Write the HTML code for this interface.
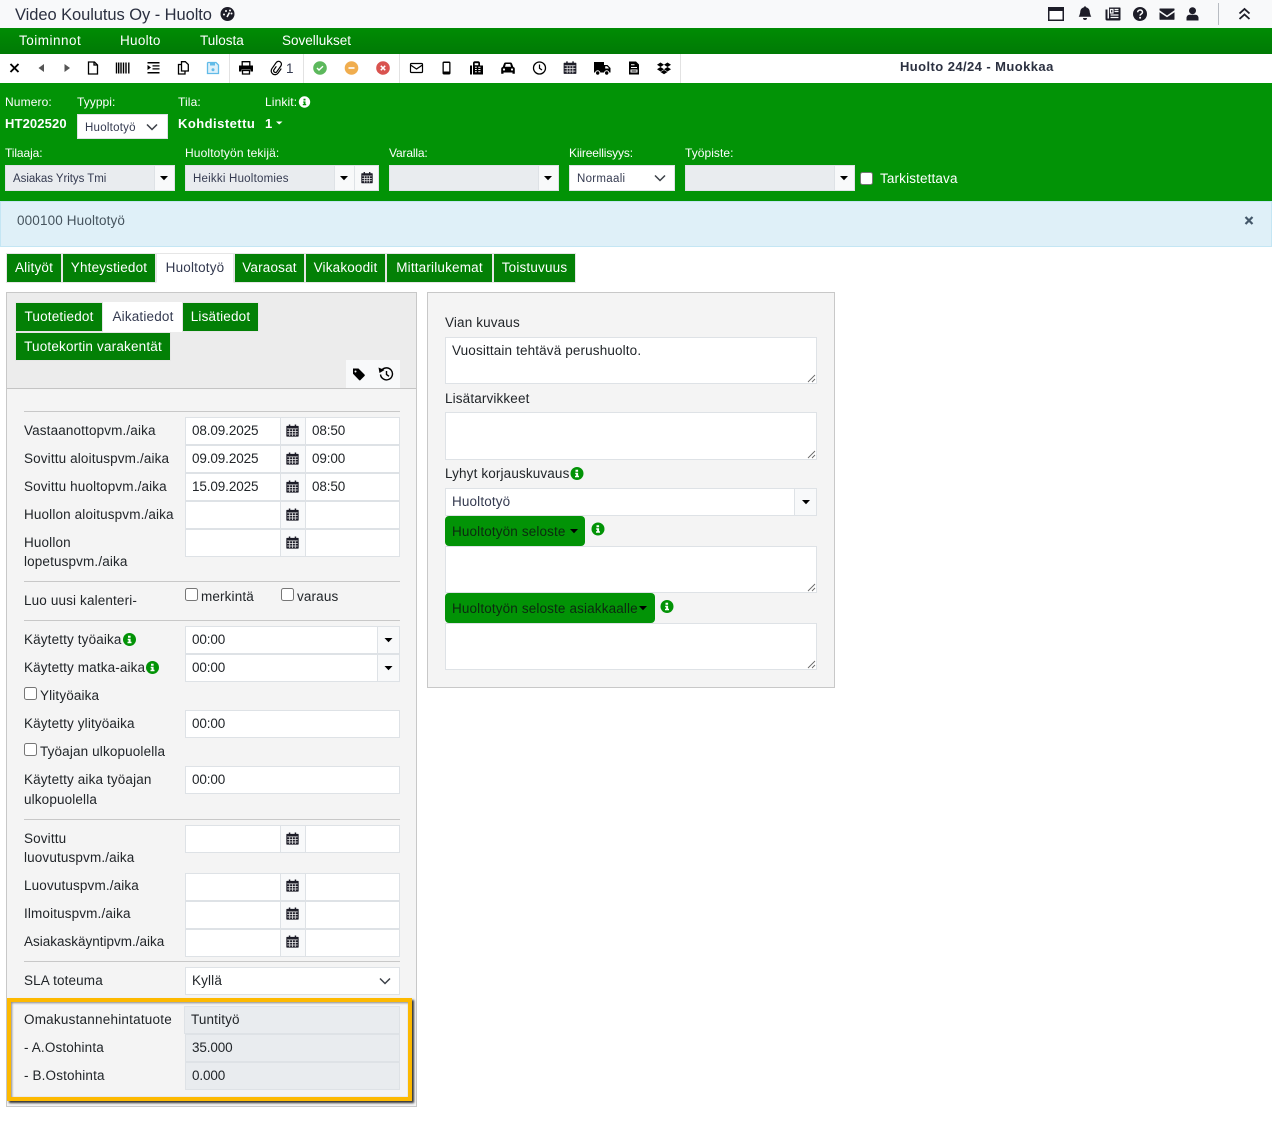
<!DOCTYPE html>
<html lang="fi"><head><meta charset="utf-8"><title>Huolto</title>
<style>
html,body{margin:0;padding:0;background:#fff}
#p{position:relative;width:1272px;height:1142px;overflow:hidden;font-family:"Liberation Sans",sans-serif;font-size:13.5px;letter-spacing:.14px;color:#212529;background:#fff}
#p div,#p span.t{position:absolute;box-sizing:border-box}
.t{white-space:nowrap;line-height:18px;height:18px;margin-top:1px}
.w{color:#fff}
.s{font-size:12px;letter-spacing:.05px;margin-top:0}
.m{margin-top:0}
.b{font-weight:bold}
.n{letter-spacing:-.12px}
.f{background:#fff;border:1px solid #dee2e6}
.g{background:#e9ecef;border:1px solid #dee2e6}
.a{background:#f8f9fa;border:1px solid #dee2e6}
.hr{height:1px;background:#c8c8c8;left:24px;width:376px}
.tab{background:#038006;color:#fff;text-align:center;line-height:28px;border:1px solid #e6e6e6;white-space:nowrap;letter-spacing:.18px}
.on{background:#fff;color:#343a50}
.cb{background:#fff;border:1px solid #767676;border-radius:2.5px;width:13px;height:13px}
.btn{background:#029306;border-radius:4px;color:#0c2a10;line-height:32px;padding-left:7px;white-space:nowrap;letter-spacing:.14px}
</style></head><body><div id="p">

<div style="left:0;top:0;width:1272px;height:28px;background:#f8f9fa"></div>
<span class="t" style="left:15px;top:5px;font-size:16.5px;letter-spacing:-.07px;color:#2b3040">Video Koulutus Oy - Huolto</span>

<div style="left:0;top:28px;width:1272px;height:26px;background:linear-gradient(#008c04,#007a05)"></div>
<span class="t w m" style="left:19px;top:32px;letter-spacing:.5px">Toiminnot</span>
<span class="t w m" style="left:120px;top:32px;letter-spacing:.28px">Huolto</span>
<span class="t w m" style="left:200px;top:32px;letter-spacing:0">Tulosta</span>
<span class="t w m" style="left:282px;top:32px;letter-spacing:0">Sovellukset</span>

<div style="left:0;top:54px;width:1272px;height:29px;background:#fff"></div>
<div style="left:229px;top:54px;width:1px;height:29px;background:#e2e2e2"></div>
<div style="left:303px;top:54px;width:1px;height:29px;background:#e2e2e2"></div>
<div style="left:399px;top:54px;width:1px;height:29px;background:#e2e2e2"></div>
<div style="left:680px;top:54px;width:1px;height:29px;background:#e2e2e2"></div>
<span class="t" style="left:286px;top:59px;color:#343a50">1</span>
<span class="t b" style="left:900px;top:57px;font-size:13px;letter-spacing:.42px;color:#2b3040">Huolto 24/24 - Muokkaa</span>

<div style="left:0;top:83px;width:1272px;height:118px;background:#029306"></div>
<span class="t w s" style="left:5px;top:93px;letter-spacing:.12px">Numero:</span>
<span class="t w s" style="left:77px;top:93px">Tyyppi:</span>
<span class="t w s" style="left:178px;top:93px;letter-spacing:.12px">Tila:</span>
<span class="t w s" style="left:265px;top:93px;letter-spacing:.12px">Linkit:</span>
<span class="t w b" style="left:5px;top:114px;font-size:13px;letter-spacing:.12px">HT202520</span>
<span class="t w b" style="left:178px;top:114px;font-size:13px;letter-spacing:.46px">Kohdistettu</span>
<span class="t w b" style="left:265px;top:114px;font-size:13px">1</span>
<div class="f" style="left:77px;top:114px;width:91px;height:25px"></div>
<span class="t s" style="left:85px;top:119px;font-size:11.5px;letter-spacing:.25px;color:#343a50">Huoltotyö</span>

<span class="t w s" style="left:5px;top:144px;letter-spacing:-.1px">Tilaaja:</span>
<span class="t w s" style="left:185px;top:144px;letter-spacing:.13px">Huoltotyön tekijä:</span>
<span class="t w s" style="left:389px;top:144px;letter-spacing:-.15px">Varalla:</span>
<span class="t w s" style="left:569px;top:144px;letter-spacing:-.15px">Kiireellisyys:</span>
<span class="t w s" style="left:685px;top:144px">Työpiste:</span>

<div class="g" style="left:5px;top:165px;width:150px;height:26px"></div>
<div class="a" style="left:154px;top:165px;width:21px;height:26px"></div>
<span class="t" style="left:13px;top:169px;font-size:11.5px;letter-spacing:-.05px;color:#343a50">Asiakas Yritys Tmi</span>
<div class="g" style="left:185px;top:165px;width:150px;height:26px"></div>
<div class="a" style="left:334px;top:165px;width:21px;height:26px"></div>
<div class="a" style="left:354px;top:165px;width:25px;height:26px"></div>
<span class="t" style="left:193px;top:169px;font-size:11.5px;letter-spacing:.22px;color:#343a50">Heikki Huoltomies</span>
<div class="g" style="left:389px;top:165px;width:150px;height:26px"></div>
<div class="a" style="left:538px;top:165px;width:21px;height:26px"></div>
<div class="f" style="left:569px;top:165px;width:106px;height:26px"></div>
<span class="t" style="left:577px;top:169px;font-size:11.5px;letter-spacing:.3px;color:#343a50">Normaali</span>
<div class="g" style="left:685px;top:165px;width:150px;height:26px"></div>
<div class="a" style="left:834px;top:165px;width:21px;height:26px"></div>
<div class="cb" style="left:860px;top:172px"></div>
<span class="t w" style="left:880px;top:169px">Tarkistettava</span>

<div style="left:0;top:201px;width:1272px;height:46px;background:#dff0f8;border:1px solid #c4e6f4"></div>
<span class="t" style="left:17px;top:211px;color:#46545e">000100 Huoltotyö</span>

<div class="tab" style="left:6px;top:253px;width:56px;height:30px">Alityöt</div>
<div class="tab" style="left:62px;top:253px;width:94px;height:30px">Yhteystiedot</div>
<div class="tab on" style="left:156px;top:253px;width:78px;height:30px;border-bottom-color:#fff">Huoltotyö</div>
<div class="tab" style="left:234px;top:253px;width:71px;height:30px">Varaosat</div>
<div class="tab" style="left:305px;top:253px;width:81px;height:30px">Vikakoodit</div>
<div class="tab" style="left:386px;top:253px;width:107px;height:30px">Mittarilukemat</div>
<div class="tab" style="left:493px;top:253px;width:83px;height:30px">Toistuvuus</div>

<!-- left panel -->
<div style="left:6px;top:292px;width:411px;height:815px;background:#f4f4f4;border:1px solid #c8c8c8"></div>
<div style="left:7px;top:293px;width:409px;height:96px;background:#ececec;border-bottom:1px solid #c4c4c4"></div>
<div class="tab" style="left:15px;top:302px;width:88px;height:30px">Tuotetiedot</div>
<div class="tab on" style="left:103px;top:302px;width:80px;height:30px;border-color:#fff">Aikatiedot</div>
<div class="tab" style="left:182px;top:302px;width:77px;height:30px">Lisätiedot</div>
<div class="tab" style="left:15px;top:332px;width:156px;height:29px;line-height:27px">Tuotekortin varakentät</div>
<div style="left:346px;top:360px;width:54px;height:28px;background:#f8f9fa"></div>

<div class="hr" style="top:411px"></div>

<span class="t" style="left:24px;top:421px">Vastaanottopvm./aika</span>
<div class="f" style="left:185px;top:417px;width:96px;height:28px"></div><div class="a" style="left:280px;top:417px;width:26px;height:28px"></div><div class="f" style="left:305px;top:417px;width:95px;height:28px"></div>
<span class="t n" style="left:192px;top:421px">08.09.2025</span><span class="t n" style="left:312px;top:421px">08:50</span>

<span class="t" style="left:24px;top:449px">Sovittu aloituspvm./aika</span>
<div class="f" style="left:185px;top:445px;width:96px;height:28px"></div><div class="a" style="left:280px;top:445px;width:26px;height:28px"></div><div class="f" style="left:305px;top:445px;width:95px;height:28px"></div>
<span class="t n" style="left:192px;top:449px">09.09.2025</span><span class="t n" style="left:312px;top:449px">09:00</span>

<span class="t" style="left:24px;top:477px">Sovittu huoltopvm./aika</span>
<div class="f" style="left:185px;top:473px;width:96px;height:28px"></div><div class="a" style="left:280px;top:473px;width:26px;height:28px"></div><div class="f" style="left:305px;top:473px;width:95px;height:28px"></div>
<span class="t n" style="left:192px;top:477px">15.09.2025</span><span class="t n" style="left:312px;top:477px">08:50</span>

<span class="t" style="left:24px;top:505px">Huollon aloituspvm./aika</span>
<div class="f" style="left:185px;top:501px;width:96px;height:28px"></div><div class="a" style="left:280px;top:501px;width:26px;height:28px"></div><div class="f" style="left:305px;top:501px;width:95px;height:28px"></div>

<span class="t" style="left:24px;top:533px">Huollon</span><span class="t" style="left:24px;top:552px">lopetuspvm./aika</span>
<div class="f" style="left:185px;top:529px;width:96px;height:28px"></div><div class="a" style="left:280px;top:529px;width:26px;height:28px"></div><div class="f" style="left:305px;top:529px;width:95px;height:28px"></div>

<div class="hr" style="top:581px"></div>
<span class="t" style="left:24px;top:591px">Luo uusi kalenteri-</span>
<div class="cb" style="left:185px;top:588px"></div><span class="t" style="left:201px;top:587px">merkintä</span>
<div class="cb" style="left:281px;top:588px"></div><span class="t" style="left:297px;top:587px">varaus</span>
<div class="hr" style="top:620px"></div>

<span class="t" style="left:24px;top:630px">Käytetty työaika</span>
<div class="f" style="left:185px;top:626px;width:193px;height:28px"></div><div class="a" style="left:377px;top:626px;width:23px;height:28px"></div>
<span class="t n" style="left:192px;top:630px">00:00</span>
<span class="t" style="left:24px;top:658px">Käytetty matka-aika</span>
<div class="f" style="left:185px;top:654px;width:193px;height:28px"></div><div class="a" style="left:377px;top:654px;width:23px;height:28px"></div>
<span class="t n" style="left:192px;top:658px">00:00</span>

<div class="cb" style="left:24px;top:687px"></div><span class="t" style="left:40px;top:686px">Ylityöaika</span>
<span class="t" style="left:24px;top:714px">Käytetty ylityöaika</span>
<div class="f" style="left:185px;top:710px;width:215px;height:28px"></div><span class="t n" style="left:192px;top:714px">00:00</span>
<div class="cb" style="left:24px;top:743px"></div><span class="t" style="left:40px;top:742px">Työajan ulkopuolella</span>
<span class="t" style="left:24px;top:770px">Käytetty aika työajan</span><span class="t" style="left:24px;top:790px">ulkopuolella</span>
<div class="f" style="left:185px;top:766px;width:215px;height:28px"></div><span class="t n" style="left:192px;top:770px">00:00</span>
<div class="hr" style="top:819px"></div>

<span class="t" style="left:24px;top:829px">Sovittu</span><span class="t" style="left:24px;top:848px">luovutuspvm./aika</span>
<div class="f" style="left:185px;top:825px;width:96px;height:28px"></div><div class="a" style="left:280px;top:825px;width:26px;height:28px"></div><div class="f" style="left:305px;top:825px;width:95px;height:28px"></div>
<span class="t" style="left:24px;top:876px">Luovutuspvm./aika</span>
<div class="f" style="left:185px;top:873px;width:96px;height:28px"></div><div class="a" style="left:280px;top:873px;width:26px;height:28px"></div><div class="f" style="left:305px;top:873px;width:95px;height:28px"></div>
<span class="t" style="left:24px;top:904px">Ilmoituspvm./aika</span>
<div class="f" style="left:185px;top:901px;width:96px;height:28px"></div><div class="a" style="left:280px;top:901px;width:26px;height:28px"></div><div class="f" style="left:305px;top:901px;width:95px;height:28px"></div>
<span class="t" style="left:24px;top:932px;letter-spacing:0">Asiakaskäyntipvm./aika</span>
<div class="f" style="left:185px;top:929px;width:96px;height:28px"></div><div class="a" style="left:280px;top:929px;width:26px;height:28px"></div><div class="f" style="left:305px;top:929px;width:95px;height:28px"></div>
<div class="hr" style="top:961px"></div>

<span class="t" style="left:24px;top:971px">SLA toteuma</span>
<div class="f" style="left:185px;top:967px;width:215px;height:28px"></div><span class="t" style="left:192px;top:971px">Kyllä</span>

<div style="left:7px;top:998px;width:405px;height:103px;border:4px solid #fdb900;box-shadow:2px 2px 2px #333,inset 1px 1px 2px #888"></div>
<span class="t" style="left:24px;top:1010px;letter-spacing:.22px">Omakustannehintatuote</span>
<div class="g" style="left:184px;top:1006px;width:216px;height:28px"></div><span class="t" style="left:191px;top:1010px">Tuntityö</span>
<span class="t" style="left:24px;top:1038px">- A.Ostohinta</span>
<div class="g" style="left:185px;top:1034px;width:215px;height:28px"></div><span class="t n" style="left:192px;top:1038px">35.000</span>
<span class="t" style="left:24px;top:1066px">- B.Ostohinta</span>
<div class="g" style="left:185px;top:1062px;width:215px;height:28px"></div><span class="t n" style="left:192px;top:1066px">0.000</span>

<!-- right panel -->
<div style="left:427px;top:292px;width:408px;height:396px;background:#f4f4f4;border:1px solid #c8c8c8"></div>
<span class="t" style="left:445px;top:313px">Vian kuvaus</span>
<div class="f" style="left:445px;top:337px;width:372px;height:47px"></div>
<span class="t" style="left:452px;top:341px">Vuosittain tehtävä perushuolto.</span>
<span class="t" style="left:445px;top:389px">Lisätarvikkeet</span>
<div class="f" style="left:445px;top:412px;width:372px;height:48px"></div>
<span class="t" style="left:445px;top:464px">Lyhyt korjauskuvaus</span>
<div class="f" style="left:445px;top:488px;width:350px;height:28px"></div><div class="a" style="left:794px;top:488px;width:23px;height:28px"></div>
<span class="t" style="left:452px;top:492px;color:#343a50">Huoltotyö</span>
<div class="btn" style="left:445px;top:516px;width:140px;height:30px">Huoltotyön seloste</div>
<div class="f" style="left:445px;top:546px;width:372px;height:47px"></div>
<div class="btn" style="left:445px;top:593px;width:210px;height:30px">Huoltotyön seloste asiakkaalle</div>
<div class="f" style="left:445px;top:623px;width:372px;height:47px"></div>

<svg width="1272" height="1142" viewBox="0 0 1272 1142" style="position:absolute;left:0;top:0">
<defs>
<g id="cal"><path d="M-6-5h2v-1.5h1.6V-5h4.8v-1.500H4V-5h2a.7.7 0 0 1 .7.7V6a.7.7 0 0 1-.7.7H-6a.7.7 0 0 1-.7-.7V-4.300A.7.7 0 0 1-6-5z" fill="#1d1d28"/><path d="M-5.700-1.800H5.700M-5.700 1H5.700M-5.700 3.800H5.700M-3 -1.800V6M0-1.800V6M3-1.800V6" stroke="#f2f2f2" stroke-width=".8" fill="none"/></g>
<path id="car" d="M-4-2H4L0 2.300z" fill="#000"/>
<path id="chev" d="M-5-2.500 0 2.500 5-2.500" fill="none" stroke="#3c4048" stroke-width="1.500"/>
<g id="inf"><circle r="6.500" fill="#029306"/><path d="M-1.500-3.800h2.600v2H-1.500zM-1.800-.8H1.100V2.200H2V3.800H-2V2.200H-.9V.7H-1.800z" fill="#fff"/></g>
<path id="grip" d="M-7 0 0-7M-3 0 0-3" stroke="#6a6a6a" stroke-width=".9" fill="none"/>
</defs>

<!-- title icon -->
<g transform="translate(227.500,14)"><circle r="7" fill="#1d1d28"/><circle cx="-3.500" cy=".5" r="1" fill="#fff"/><circle cx="-1.500" cy="-3" r="1" fill="#fff"/><circle cx="2.500" cy="-3.500" r="1" fill="#fff"/><circle cx="4" cy="-.5" r="1" fill="#fff"/><path d="M-.5 3 2-1.500" stroke="#fff" stroke-width="1.600"/></g>

<!-- top-right -->
<g transform="translate(1056,14)"><path d="M-8-7H8V7H-8z" fill="#1d1d28"/><rect x="-6.500" y="-3" width="13" height="8.500" fill="#fff"/></g>
<path transform="translate(1085,14)" d="M-1-6.800a1 1 0 0 1 2 0C4-6 4.700-4 4.800-1.500 5-.5 5.500 1.500 6.300 2.800H-6.300C-5.500 1.500-5-.5-4.800-1.500-4.700-4-4-6-1-6.800zM-2 4H2A2 2 0 0 1-2 4z" fill="#1d1d28"/>
<g transform="translate(1113,14)"><path d="M-4-6.500H7a.8.800 0 0 1 .5.8V5.500A1 1 0 0 1 6.500 6.500H-6A1.500 1.500 0 0 1-7.500 5V-4.500H-5.500V4.500H-4z" fill="#1d1d28"/><path d="M-2.500-4.500H0V-1H-2.500zM1.500-4.500H5.500M1.500-2.500H5.500M-2.500 1H5.500M-2.500 3.500H5.500" stroke="#f8f9fa" stroke-width="1.200" fill="none"/></g>
<g transform="translate(1140,14)"><circle r="7" fill="#1d1d28"/><path d="M-2.300-1.800C-2.300-4.600 2.500-4.800 2.500-1.800 2.500 0 .1 0 .1 1.600" fill="none" stroke="#fff" stroke-width="1.500"/><circle cx=".1" cy="3.700" r="1" fill="#fff"/></g>
<g transform="translate(1167,14)"><path d="M-7-5.500H7A.5.500 0 0 1 7.500-5V-3.800L0 1.500-7.500-3.800V-5A.5.500 0 0 1-7-5.500zM-7.500-1.800 0 3.300 7.500-1.800V5A.8.800 0 0 1 6.500 5.800H-6.500A.8.800 0 0 1-7.500 5z" fill="#1d1d28"/></g>
<g transform="translate(1192.500,14)"><circle cy="-3.300" r="3.500" fill="#1d1d28"/><path d="M-6 6.500V3.500A3.500 3.500 0 0 1-2.500 .8H2.500A3.500 3.500 0 0 1 6 3.500V6.500z" fill="#1d1d28"/></g>
<rect x="1218" y="3" width="1" height="22" fill="#b8bcc2"/>
<path transform="translate(1244.500,14)" d="M-5-.5 0-5 5-.5M-5 5 0 .5 5 5" fill="none" stroke="#1d1d28" stroke-width="1.800"/>

<!-- toolbar -->
<path transform="translate(14.500,68)" d="M-4-4 4 4M4-4-4 4" stroke="#000" stroke-width="1.900" fill="none"/>
<path d="M44 64V72L38.500 68z" fill="#555"/>
<path d="M64.500 64V72L70 68z" fill="#555"/>
<path transform="translate(93,68)" d="M-4.500-6H1.500L4.500-3V6H-4.500zM1-6V-3H4.500" fill="none" stroke="#000" stroke-width="1.300"/>
<path transform="translate(123,68)" d="M-6.500-5.500V5.500M-4.300-5.500V5.500M-2-5.500V5.500M.5-5.500V5.500M3-5.500V5.500M5.800-5.500V5.500" stroke="#000" stroke-width="1.400" fill="none"/>
<path transform="translate(153.500,68)" d="M-6-6H6V-4.500H-6zM-1-2.800H6V-1.500H-1zM-1 .2H6V1.500H-1zM-6 4H6V5.500H-6zM-6-3V2L-2.500-.5z" fill="#000"/>
<g transform="translate(183.500,68)" fill="none" stroke="#000" stroke-width="1.300"><path d="M-2-3.500H-5V6H1.500V3"/><path d="M-2-6.300H1.800L4.800-3.500V3H-2z"/></g>
<g transform="translate(213,68)"><path d="M-5-5.500H3L5.500-3V5.500H-5.500V-5z" fill="#dff0fa" stroke="#62bbe8" stroke-width="1.300"/><rect x="-3" y="-5" width="5" height="2.500" fill="#62bbe8"/><circle cy="1.800" r="1.500" fill="#62bbe8"/></g>
<g transform="translate(246,68)"><path d="M-3.800-2.500V-6.300H3.800V-2.500" fill="none" stroke="#000" stroke-width="1.300"/><path d="M-7-2.500H7V3.500H4.500V1.500H-4.500V3.500H-7z" fill="#000"/><path d="M-3.500 2.500H3.500V6H-3.500z" fill="none" stroke="#000" stroke-width="1.300"/></g>
<path transform="translate(277,68) rotate(35)" d="M-1.500-1V3.500A1.800 1.800 0 0 0 2 3.500V-4A2.900 2.900 0 0 0-3.800-4V3.500A3.800 3.800 0 0 0 3.800 3.500V-2" fill="none" stroke="#000" stroke-width="1.200"/>
<g transform="translate(320,68)"><circle r="6.800" fill="#5cb85c"/><path d="M-3 0-1 2 3-1.800" stroke="#fff" stroke-width="1.400" fill="none"/></g>
<g transform="translate(351.500,68)"><circle r="6.800" fill="#f0ad4e"/><rect x="-3" y="-.8" width="6" height="1.600" fill="#fff"/></g>
<g transform="translate(383,68)"><circle r="6.800" fill="#d9534f"/><path d="M-2.200-2.200 2.200 2.200M2.200-2.200-2.200 2.200" stroke="#fff" stroke-width="1.500"/></g>
<g transform="translate(416.500,68)" fill="none" stroke="#000" stroke-width="1.200"><rect x="-6" y="-4.500" width="12" height="9" rx="1"/><path d="M-6-3 0 1 6-3"/></g>
<g transform="translate(446.500,68)"><rect x="-4" y="-6.500" width="8" height="13" rx="1.500" fill="#000"/><rect x="-2.700" y="-5" width="5.400" height="8.500" fill="#fff"/></g>
<g transform="translate(476.500,68)"><path d="M-6.500-2.500H-4.500V6.500H-6.500zM-3.500-2.500V-5A2 2 0 0 1-1.500-6.800H1.500A2 2 0 0 1 3.500-5V-2.500H6.500V6.500H-3.500z" fill="#000"/><path d="M-1.800-4.800H1.800V-2.800H-1.800z" fill="#fff"/><path d="M-1.500-.8H.3M1.800-.8H4M-1.500 1.500H.3M1.800 1.500H4M-1.500 3.800H.3M1.800 3.800H4" stroke="#fff" stroke-width="1"/></g>
<g transform="translate(508,68)"><path d="M-6.800 5.800V1A2 2 0 0 1-5.300-1L-4-4.500A1.500 1.500 0 0 1-2.500-5.500H2.500A1.500 1.500 0 0 1 4-4.500L5.300-1A2 2 0 0 1 6.800 1V5.800H4.500V4.500H-4.500V5.800z" fill="#000"/><path d="M-3-1.300-2.200-4H2.200L3-1.300z" fill="#fff"/><circle cx="-4" cy="1.500" r="1.100" fill="#fff"/><circle cx="4" cy="1.500" r="1.100" fill="#fff"/></g>
<g transform="translate(539.500,68)" fill="none" stroke="#000"><circle r="6" stroke-width="1.300"/><path d="M0-3.500V.3L2.500 2" stroke-width="1.200"/></g>
<use href="#cal" transform="translate(570,67.500) scale(.95)"/>
<g transform="translate(602,68)"><path d="M-8-6H2V-3H5.500L8.500 0V4.500H-8z" fill="#000"/><circle cx="-4.300" cy="5" r="2.200" fill="#000" stroke="#fff"/><circle cx="4.700" cy="5" r="2.200" fill="#000" stroke="#fff"/><path d="M3.200-1.800H5L6.800 0V.5H3.200z" fill="#fff"/></g>
<g transform="translate(634,68)"><path d="M-5-6.500H2L5-3.500V6.500H-5z" fill="#000"/><path d="M-3-3.200H.5M-3-.5H3M-3 2H3V4H-3z" stroke="#fff" stroke-width="1" fill="none"/></g>
<path transform="translate(664,68)" d="M-3.500-5.500 0-3.300-3.500-1-7-3.300zM3.500-5.500 7-3.300 3.500-1 0-3.300zM-3.500-1 0 1.200-3.500 3.500-7 1.200zM3.500-1 7 1.200 3.500 3.500 0 1.200zM-3.500 4 0 2 3.500 4 0 6.300z" fill="#000"/>

<!-- green header -->
<g transform="translate(304.500,102)"><circle r="5.700" fill="#fff"/><path d="M-1-3.300H1V-1.500H-1zM-1.300-.6H1V2H1.700V3.300H-1.700V2H-.8V.6H-1.300z" fill="#029306"/></g>
<path d="M276 121.500H282.500L279.200 124.500z" fill="#fff"/>
<use href="#chev" transform="translate(152,127)"/>
<use href="#car" transform="translate(164,178)"/>
<use href="#car" transform="translate(344,178)"/>
<use href="#cal" transform="translate(367,177.500) scale(.85)"/>
<use href="#car" transform="translate(548,178)"/>
<use href="#chev" transform="translate(660,178)"/>
<use href="#car" transform="translate(844,178)"/>

<path transform="translate(1249,220.500)" d="M-3.500-3.500 3.500 3.500M3.500-3.500-3.500 3.500" stroke="#44586a" stroke-width="2.200" fill="none"/>

<!-- panel tools -->
<path transform="translate(359,374)" d="M-6-5.500H-.5L5.500.5A1 1 0 0 1 5.500 2L1.500 6A1 1 0 0 1 0 6L-6-.2z" fill="#000"/>
<circle cx="355.500" cy="371.500" r="1" fill="#f8f9fa"/>
<g transform="translate(386.500,374)" fill="none" stroke="#000" stroke-width="1.400"><path d="M-5-3.500A6 6 0 1 1-6 .5"/><path d="M0-3V.5L2.500 2.300"/></g><path d="M378.500 367.500 384.500 370 379.500 373z" fill="#000"/>

<use href="#cal" transform="translate(292.500,430.500) scale(.92)"/>
<use href="#cal" transform="translate(292.500,458.500) scale(.92)"/>
<use href="#cal" transform="translate(292.500,486.500) scale(.92)"/>
<use href="#cal" transform="translate(292.500,514.500) scale(.92)"/>
<use href="#cal" transform="translate(292.500,542.500) scale(.92)"/>
<use href="#cal" transform="translate(292.500,838.500) scale(.92)"/>
<use href="#cal" transform="translate(292.500,885.500) scale(.92)"/>
<use href="#cal" transform="translate(292.500,913.500) scale(.92)"/>
<use href="#cal" transform="translate(292.500,941.500) scale(.92)"/>

<use href="#inf" transform="translate(129.500,639.500)"/>
<use href="#inf" transform="translate(152.500,667.500)"/>
<use href="#car" transform="translate(388.500,640)"/>
<use href="#car" transform="translate(388.500,668)"/>
<use href="#chev" transform="translate(385,981)"/>

<!-- right panel -->
<use href="#grip" transform="translate(815,382)"/>
<use href="#grip" transform="translate(815,458)"/>
<use href="#grip" transform="translate(815,591)"/>
<use href="#grip" transform="translate(815,668)"/>
<use href="#inf" transform="translate(577,473.500)"/>
<use href="#car" transform="translate(806,502)"/>
<use href="#car" transform="translate(574,531)"/>
<use href="#inf" transform="translate(598,529)"/>
<use href="#car" transform="translate(643,608)"/>
<use href="#inf" transform="translate(667,606.500)"/>
</svg>
</div></body></html>
